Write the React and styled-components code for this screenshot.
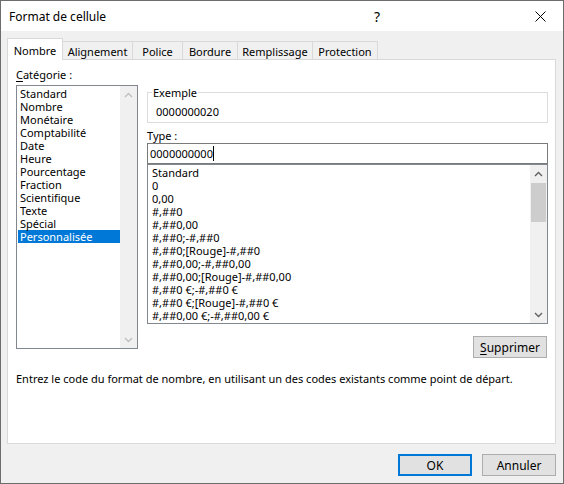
import React from "react";
import styled, { createGlobalStyle } from "styled-components";

const GlobalStyle = createGlobalStyle`
  html, body {
    margin: 0;
    padding: 0;
    background: #ffffff;
  }
  body {
    font-family: "Segoe UI", "Noto Sans", sans-serif;
    font-size: 11px;
    color: #000000;
  }
  * {
    box-sizing: border-box;
  }
`;

const Window = styled.div`
  width: 564px;
  height: 484px;
  border: 1px solid #6d6d6d;
  background: #f0f0f0;
  display: flex;
  flex-direction: column;
`;

const TitleBar = styled.div`
  height: 30px;
  background: #ffffff;
  display: flex;
  align-items: center;
  padding-left: 8px;
  font-size: 12px;
`;

const Title = styled.div`
  flex: 1;
`;

const TitleButton = styled.div`
  width: 46px;
  height: 30px;
  display: flex;
  align-items: center;
  justify-content: center;
  font-size: 14px;
  margin-right: ${(p) => p.$gap || 0}px;
`;

const Body = styled.div`
  flex: 1;
  display: flex;
  flex-direction: column;
  padding: 7px 7px 0 6px;
`;

const Tabs = styled.div`
  display: flex;
  align-items: flex-end;
  height: 22px;
  margin-bottom: -1px;
  position: relative;
  z-index: 1;
`;

const Tab = styled.div`
  width: ${(p) => p.$w}px;
  margin-left: ${(p) => (p.$first ? 0 : -1)}px;
  border: 1px solid #d9d9d9;
  border-bottom: none;
  display: flex;
  justify-content: center;
  align-items: center;
  height: ${(p) => (p.$active ? 22 : 18)}px;
  margin-bottom: ${(p) => (p.$active ? 0 : 1)}px;
  padding-top: ${(p) => (p.$active ? 1 : 2)}px;
  background: ${(p) => (p.$active ? "#ffffff" : "#f0f0f0")};
  position: relative;
  z-index: ${(p) => (p.$active ? 2 : 1)};
`;

const Panel = styled.div`
  height: 385px;
  border: 1px solid #d9d9d9;
  background: #ffffff;
  padding: 7px 7px 0 8px;
  display: flex;
  flex-direction: column;
`;

const Content = styled.div`
  display: flex;
  gap: 9px;
  align-items: flex-start;
`;

const LeftCol = styled.div`
  width: 122px;
  display: flex;
  flex-direction: column;
`;

const RightCol = styled.div`
  width: 401px;
  display: flex;
  flex-direction: column;
  padding-top: 19px;
`;

const Label = styled.div`
  line-height: ${(p) => p.$lh || 16}px;
  margin-bottom: ${(p) => p.$mb || 0}px;
  margin-top: ${(p) => p.$mt || 0}px;
  white-space: nowrap;
`;

const Key = styled.span`
  text-decoration: underline;
  text-underline-offset: 2px;
`;

const ListBox = styled.div`
  height: ${(p) => p.$h}px;
  border: 1px solid #828790;
  display: flex;
  background: #ffffff;
`;

const Items = styled.div`
  flex: 1;
  padding: 1px 0 0 1px;
  overflow: hidden;
`;

const Item = styled.div`
  height: 13px;
  line-height: 13px;
  padding-left: ${(p) => p.$pad || 2}px;
  white-space: nowrap;
  background: ${(p) => (p.$selected ? "#0078d7" : "transparent")};
  color: ${(p) => (p.$selected ? "#ffffff" : "#000000")};
`;

const Scrollbar = styled.div`
  width: 17px;
  background: #f0f0f0;
  display: flex;
  flex-direction: column;
`;

const Arrow = styled.div`
  height: 17px;
  display: flex;
  align-items: center;
  justify-content: center;
  color: ${(p) => (p.$disabled ? "#bfbfbf" : "#606060")};
`;

const Track = styled.div`
  flex: 1;
  padding: 1px 1px 0 1px;
`;

const Thumb = styled.div`
  height: 39px;
  background: #cdcdcd;
`;

const Group = styled.fieldset`
  margin: 0;
  padding: 0;
  min-width: 0;
  border: 1px solid #dcdcdc;
`;

const Legend = styled.legend`
  margin-left: 4px;
  padding: 0 1px;
  line-height: 13px;
`;

const GroupValue = styled.div`
  padding: 5px 0 2px 8px;
  line-height: 16px;
`;

const Input = styled.div`
  height: 21px;
  border: 1px solid #7a7a7a;
  padding-left: 2px;
  display: flex;
  align-items: center;
`;

const Caret = styled.span`
  display: inline-block;
  width: 1px;
  height: 15px;
  background: #000000;
`;

const Actions = styled.div`
  display: flex;
  justify-content: flex-end;
  gap: 10px;
  margin-top: ${(p) => p.$mt || 0}px;
`;

const Button = styled.div`
  width: 74px;
  height: 22px;
  background: #e1e1e1;
  border: ${(p) => (p.$default ? "2px solid #0078d7" : "1px solid #adadad")};
  display: flex;
  align-items: center;
  justify-content: center;
  font-size: 12px;
  margin-right: ${(p) => p.$mr || 0}px;
`;

const Hint = styled.div`
  margin-top: 13px;
  line-height: 16px;
  white-space: nowrap;
`;

const Chevron = ({ up }) => (
  <svg width="9" height="6" viewBox="0 0 9 6">
    <path
      d={up ? "M1 5 L4.5 1.5 L8 5" : "M1 1 L4.5 4.5 L8 1"}
      fill="none"
      stroke="currentColor"
      strokeWidth="1.4"
    />
  </svg>
);

const CloseIcon = () => (
  <svg width="11" height="11" viewBox="0 0 11 11">
    <path d="M0.5 0.5 L10.5 10.5 M10.5 0.5 L0.5 10.5" stroke="#000" strokeWidth="1" />
  </svg>
);

const tabs = [
  { label: "Nombre", w: 56 },
  { label: "Alignement", w: 71 },
  { label: "Police", w: 51 },
  { label: "Bordure", w: 56 },
  { label: "Remplissage", w: 76 },
  { label: "Protection", w: 66 },
];

const categories = [
  "Standard",
  "Nombre",
  "Monétaire",
  "Comptabilité",
  "Date",
  "Heure",
  "Pourcentage",
  "Fraction",
  "Scientifique",
  "Texte",
  "Spécial",
  "Personnalisée",
];

const formats = [
  "Standard",
  "0",
  "0,00",
  "#,##0",
  "#,##0,00",
  "#,##0;-#,##0",
  "#,##0;[Rouge]-#,##0",
  "#,##0,00;-#,##0,00",
  "#,##0,00;[Rouge]-#,##0,00",
  "#,##0 €;-#,##0 €",
  "#,##0 €;[Rouge]-#,##0 €",
  "#,##0,00 €;-#,##0,00 €",
];

export default function App() {
  return (
    <>
      <GlobalStyle />
      <Window>
        <TitleBar>
          <Title>Format de cellule</Title>
          <TitleButton $gap={117}>?</TitleButton>
          <TitleButton>
            <CloseIcon />
          </TitleButton>
        </TitleBar>

        <Body>
          <Tabs>
            {tabs.map((t, i) => (
              <Tab key={t.label} $w={t.w} $first={i === 0} $active={i === 0}>
                {t.label}
              </Tab>
            ))}
          </Tabs>

          <Panel>
            <Content>
              <LeftCol>
                <Label $mb={2}>
                  <Key>C</Key>atégorie :
                </Label>
                <ListBox $h={264}>
                  <Items>
                    {categories.map((c) => (
                      <Item key={c} $selected={c === "Personnalisée"}>
                        {c}
                      </Item>
                    ))}
                  </Items>
                  <Scrollbar>
                    <Arrow $disabled>
                      <Chevron up />
                    </Arrow>
                    <Track />
                    <Arrow $disabled>
                      <Chevron />
                    </Arrow>
                  </Scrollbar>
                </ListBox>
              </LeftCol>

              <RightCol>
                <Group>
                  <Legend>Exemple</Legend>
                  <GroupValue>0000000020</GroupValue>
                </Group>
                <Label $mt={5} $lh={15}>
                  Type :
                </Label>
                <Input>
                  0000000000
                  <Caret />
                </Input>
                <ListBox $h={160}>
                  <Items>
                    {formats.map((f) => (
                      <Item key={f} $pad={3}>
                        {f}
                      </Item>
                    ))}
                  </Items>
                  <Scrollbar>
                    <Arrow>
                      <Chevron up />
                    </Arrow>
                    <Track>
                      <Thumb />
                    </Track>
                    <Arrow>
                      <Chevron />
                    </Arrow>
                  </Scrollbar>
                </ListBox>
                <Actions $mt={12}>
                  <Button $mr={1}>
                    <span>
                      <Key>S</Key>upprimer
                    </span>
                  </Button>
                </Actions>
              </RightCol>
            </Content>

            <Hint>
              Entrez le code du format de nombre, en utilisant un des codes
              existants comme point de départ.
            </Hint>
          </Panel>

          <Actions $mt={10}>
            <Button $default>OK</Button>
            <Button>Annuler</Button>
          </Actions>
        </Body>
      </Window>
    </>
  );
}
